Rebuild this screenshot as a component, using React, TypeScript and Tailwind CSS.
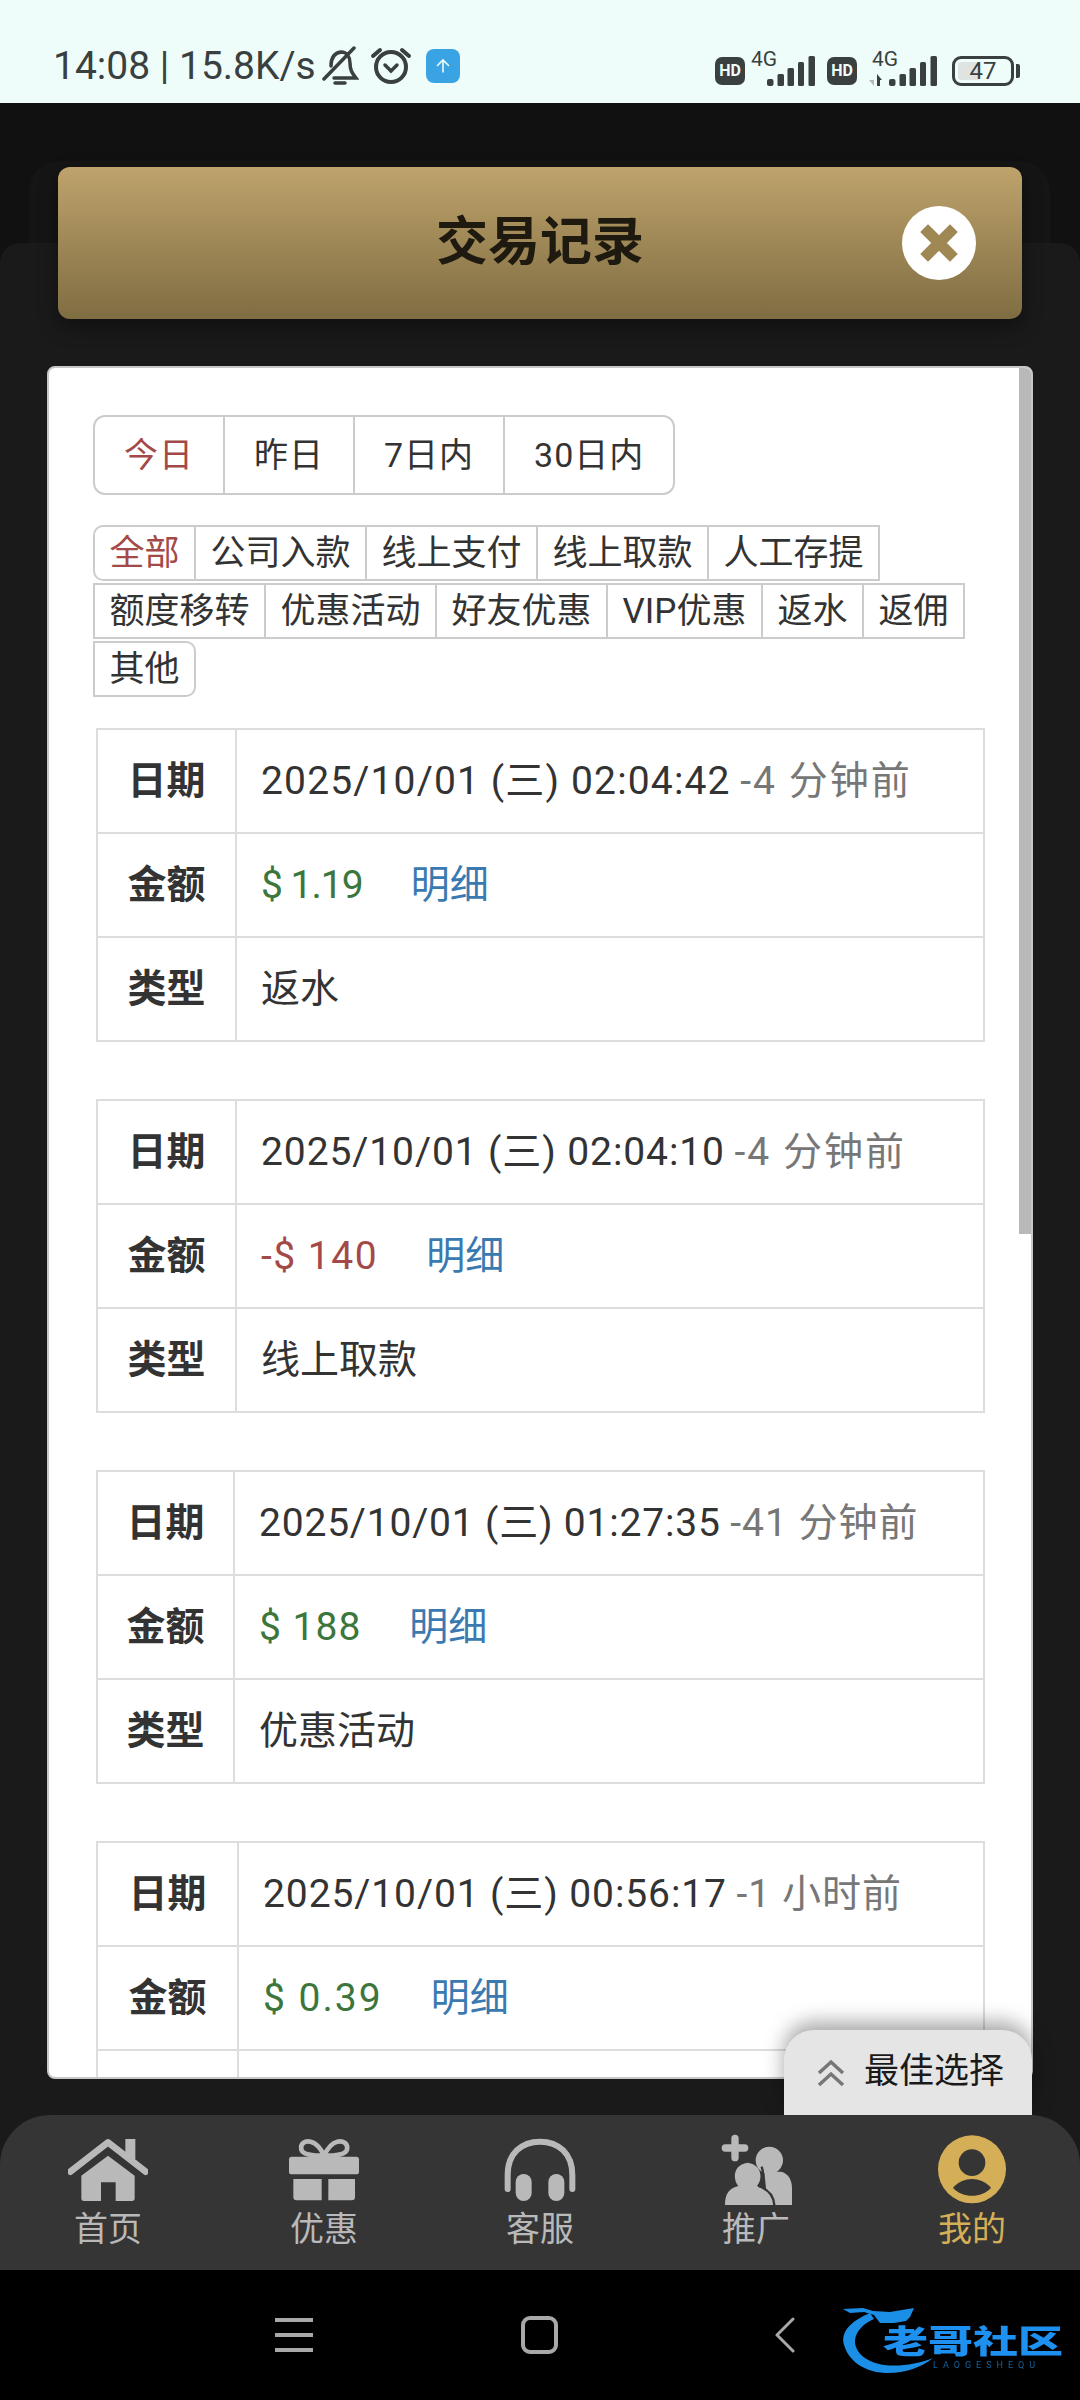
const ICON_GRAY = '#b9b9b9'

const records = [
  { col: 'w-[139px]', date: '2025/10/01 (三) 02:04:42', dateTone: 'tracking-[1.15px]', ago: '-4 分钟前', agoTone: 'tracking-[2px]', amount: '$ 1.19', tone: 'text-[#3c763d] tracking-[-1px]', type: '返水' },
  { col: 'w-[139px]', date: '2025/10/01 (三) 02:04:10', dateTone: 'tracking-[0.9px]', ago: '-4 分钟前', agoTone: 'tracking-[2px]', amount: '-$ 140', tone: 'text-[#a34a48] tracking-[1.5px]', type: '线上取款' },
  { col: 'w-[137px]', date: '2025/10/01 (三) 01:27:35', dateTone: 'tracking-[0.8px]', ago: '-41 分钟前', agoTone: 'tracking-[1px]', amount: '$ 188', tone: 'text-[#3c763d] tracking-[1px]', type: '优惠活动' },
  { col: 'w-[141px]', date: '2025/10/01 (三) 00:56:17', dateTone: 'tracking-[0.9px]', ago: '-1 小时前', agoTone: 'tracking-[1px]', amount: '$ 0.39', tone: 'text-[#3c763d] tracking-[2px]', type: '' },
]

const dateTabs = ['今日', '昨日', '7日内', '30日内']
const filters = ['全部', '公司入款', '线上支付', '线上取款', '人工存提', '额度移转', '优惠活动', '好友优惠', 'VIP优惠', '返水', '返佣', '其他']

const SignalBars = () => (
  <svg width="48" height="30" viewBox="0 0 48 30" fill="#3a3f3f">
    <rect x="0" y="23" width="6.5" height="7" rx="2" />
    <rect x="10.5" y="18" width="6.5" height="12" rx="1.5" />
    <rect x="20.5" y="12" width="6.5" height="18" rx="1.5" />
    <rect x="31" y="6" width="6" height="24" rx="1.5" />
    <rect x="41.5" y="0" width="6.5" height="30" rx="1.5" />
  </svg>
)

const HdBadge = () => (
  <div className="flex h-[28px] w-[30px] shrink-0 items-center justify-center rounded-[7px] bg-[#3a3f3f] text-[16px] leading-none font-bold text-[#eefdf9]">
    HD
  </div>
)

const StatusBar = () => (
  <div className="flex h-[103px] items-end justify-between bg-[#eefdf9] pr-[66px] pb-[17px] pl-[53px] text-[#3a3f3f]">
    <div className="flex items-center">
      <span className="text-[39px] leading-[40px]">14:08 | 15.8K/s</span>
      <svg className="ml-[5px]" width="38" height="40" viewBox="0 0 38 40" fill="none" stroke="#3a3f3f" strokeWidth="3.5" strokeLinecap="round">
        <path d="M10 20 C10 12 13 7 20 6 C26 6 29 11 29 17 C29 24 31 27 35 32 H13" />
        <path d="M33 2 L3 33" />
        <path d="M14 37 H24" />
      </svg>
      <svg className="ml-[11px]" width="42" height="40" viewBox="0 0 42 40" fill="none" stroke="#3a3f3f" strokeLinecap="round">
        <circle cx="21" cy="21" r="15" strokeWidth="4" />
        <path d="M3 10 L10 4 M39 10 L32 4" strokeWidth="4" />
        <path d="M15 19 L21 25 L27 19" strokeWidth="3.5" />
      </svg>
      <div className="ml-[14px] flex h-[34px] w-[34px] items-center justify-center rounded-[8px] bg-[#3aa3e3]">
        <svg width="18" height="18" viewBox="0 0 18 18" fill="none" stroke="#eefdf9" strokeWidth="1.6" strokeLinecap="round">
          <path d="M9 15 V3 M3.5 8.5 L9 3 L14.5 8.5" />
        </svg>
      </div>
    </div>
    <div className="flex items-center">
      <HdBadge />
      <div className="relative ml-[22px] h-[30px] w-[48px]">
        <span className="absolute -top-[7px] -left-[16px] text-[21px] leading-none">4G</span>
        <SignalBars />
      </div>
      <div className="ml-[12px]">
        <HdBadge />
      </div>
      <div className="relative ml-[32px] h-[30px] w-[48px]">
        <span className="absolute -top-[7px] -left-[17px] text-[21px] leading-none">4G</span>
        <svg className="absolute bottom-0 -left-[20px]" width="14" height="12" viewBox="0 0 14 12">
          <path d="M0 6 H5 V12 Z" fill="#b5bab9" />
          <path d="M8 0 L13 6 H11 V12 H8 Z" fill="#3a3f3f" />
        </svg>
        <SignalBars />
      </div>
      <div className="relative ml-[15px] flex h-[30px] w-[62px] items-center rounded-[9px] border-[3px] border-[#3a3f3f] p-[3px]">
        <div className="h-full w-[43%] rounded-[3px] bg-[#dfe3e1]" />
        <span className="absolute inset-0 text-center text-[24px] leading-[24px]">47</span>
        <div className="absolute top-[5px] -right-[9px] h-[14px] w-[4px] rounded-r-[2px] bg-[#3a3f3f]" />
      </div>
    </div>
  </div>
)

const RecordTable = ({ record }: { record: (typeof records)[number] }) => {
  const th = `${record.col} border-2 border-[#dddddd] text-center font-bold text-[#333333]`
  const td = 'border-2 border-[#dddddd] pl-[24px] text-left font-normal'
  return (
    <table className="ml-[3px] w-[889px] shrink-0 border-collapse text-[39px]">
      <tbody>
        <tr className="h-[104px]">
          <th className={th}>日期</th>
          <td className={`${td} text-[#333333]`}>
            <span className={record.dateTone}>{record.date}</span>{' '}
            <span className={`${record.agoTone} text-[#777777]`}>{record.ago}</span>
          </td>
        </tr>
        <tr className="h-[104px]">
          <th className={th}>金额</th>
          <td className={td}>
            <span className={record.tone}>{record.amount}</span>
            <span className="ml-[48px] text-[#3a7ab0]">明细</span>
          </td>
        </tr>
        <tr className="h-[104px]">
          {/* last record runs past the fold, its third row shows only the grid */}
          <th className={th}>{record.type && '类型'}</th>
          <td className={`${td} text-[#333333]`}>{record.type}</td>
        </tr>
      </tbody>
    </table>
  )
}

const tabs = [
  {
    label: '首页',
    box: '85 27 240 216',
    icon: (
      <g fill={ICON_GRAY}>
        <path d="M92 140 L205 52 L318 140" fill="none" stroke={ICON_GRAY} strokeWidth="20" strokeLinecap="round" strokeLinejoin="round" />
        <rect x="257" y="42" width="30" height="60" />
        <path d="M205 92 L285 152 V220 Q285 228 277 228 H228 V172 H184 V228 H133 Q125 228 125 220 V152 Z" />
      </g>
    ),
  },
  {
    label: '优惠',
    box: '732 27 240 216',
    icon: (
      <g fill={ICON_GRAY}>
        <path d="M852 92 C830 92 790 92 784 74 C780 56 795 46 812 50 C830 54 845 75 852 92 C860 75 875 54 892 50 C910 46 925 56 921 74 C915 92 875 92 852 92 Z" fill="none" stroke={ICON_GRAY} strokeWidth="14" />
        <rect x="747" y="95" width="210" height="53" rx="8" />
        <path d="M760 162 H845 V226 H770 Q760 226 760 216 Z" />
        <path d="M865 162 H945 V216 Q945 226 935 226 H865 Z" />
      </g>
    ),
  },
  {
    label: '客服',
    box: '0 27 240 216',
    icon: (
      <g fill={ICON_GRAY}>
        <path d="M23 192 V150 C23 85 65 50 120 50 C175 50 217 85 217 150 V192" fill="none" stroke={ICON_GRAY} strokeWidth="18" strokeLinecap="round" />
        <rect x="47" y="147" width="48" height="81" rx="24" />
        <rect x="145" y="147" width="48" height="81" rx="24" />
      </g>
    ),
  },
  {
    label: '推广',
    box: '645 27 240 216',
    icon: (
      <g fill={ICON_GRAY}>
        <path d="M702 40 V98 M673 69 H731" fill="none" stroke={ICON_GRAY} strokeWidth="22" strokeLinecap="round" />
        <circle cx="805" cy="106" r="41" />
        <path d="M790 140 H840 C862 145 873 165 873 190 V240 H800 Z" />
        <path d="M672 240 C672 205 685 190 712 183 C695 165 695 118 740 113 C785 118 785 165 768 183 C795 190 810 205 812 240 Z" />
        <path d="M772 183 C800 192 818 210 820 240" fill="none" stroke="#353535" strokeWidth="7" />
        <path d="M782 125 C790 150 785 170 772 183" fill="none" stroke="#353535" strokeWidth="7" />
      </g>
    ),
  },
  {
    label: '我的',
    box: '1295 27 240 216',
    active: true,
    icon: (
      <g>
        <circle cx="1415" cy="133" r="102" fill="#d4af57" />
        <circle cx="1415" cy="113" r="40" fill="#353535" />
        <path d="M1358 188 C1375 170 1395 162 1415 162 C1435 162 1455 170 1472 188 C1458 204 1436 212 1415 212 C1394 212 1372 204 1358 188 Z" fill="#353535" />
      </g>
    ),
  },
]

const BottomTabs = () => (
  <div className="flex h-[155px] rounded-t-[50px] bg-[#353535] pt-[19px]">
    {tabs.map((tab) => (
      <div key={tab.label} className="flex flex-1 flex-col items-center">
        <svg width="80" height="72" viewBox={tab.box}>
          {tab.icon}
        </svg>
        <span className={`text-[34px] leading-[46px] ${tab.active ? 'text-[#d4af57]' : 'text-[#b9b9b9]'}`}>{tab.label}</span>
      </div>
    ))}
  </div>
)

const NavBar = () => (
  <div className="relative flex h-[130px] items-center bg-black pl-[275px]">
    <svg width="38" height="36" viewBox="0 0 38 36" stroke="#a8a8a8" strokeWidth="4">
      <path d="M0 3 H38 M0 18 H38 M0 33 H38" />
    </svg>
    <div className="ml-[208px] h-[38px] w-[37px] rounded-[9px] border-[4px] border-[#a8a8a8]" />
    <svg className="ml-[217px]" width="20" height="36" viewBox="0 0 20 36" fill="none" stroke="#a8a8a8" strokeWidth="3" strokeLinecap="round" strokeLinejoin="round">
      <path d="M18 2 L2 18 L18 34" />
    </svg>
    {/* watermark logo */}
    <div className="absolute top-[33px] left-[840px] h-[75px] w-[225px] blur-[0.6px]">
      <svg className="absolute inset-0" width="225" height="75" viewBox="0 0 225 75" fill="#1b8fe6">
        <path d="M30 10 C10 18 0 30 4 42 C10 62 30 70 48 70 C65 70 82 64 93 55 C78 61 60 64 44 62 C28 60 14 50 15 37 C16 28 24 20 34 16 Z" />
        <path d="M3 6 L23 5 L33 8 L50 9 L74 5 L70 14 L66 18 L54 20 L40 20 L34 12 L24 9 L10 10 Z" />
      </svg>
      <span className="absolute top-[22px] left-[43px] origin-center scale-y-[0.72] text-[45px] leading-[34px] font-black whitespace-nowrap text-[#1e90ef]">老哥社区</span>
      <span className="absolute top-[57px] left-[93px] text-[9px] leading-[10px] tracking-[5px] whitespace-nowrap text-[#16639f]">LAOGESHEQU</span>
    </div>
  </div>
)

export default function App() {
  return (
    <div className="flex h-[2400px] w-[1080px] flex-col bg-[#1a1a1a] font-['Roboto','Noto_Sans_CJK_SC',sans-serif]">
      <StatusBar />
      <main className="relative flex flex-1 flex-col overflow-hidden bg-[#111111]">
        {/* stacked sheets behind the dialog */}
        <div className="absolute top-[58px] right-[30px] left-[29px] h-[120px] rounded-t-[30px] bg-[#151515]" />
        <div className="absolute top-[140px] right-0 bottom-0 left-0 rounded-t-[20px] bg-[#1a1a1a]" />

        <div className="relative mx-[58px] mt-[64px] flex h-[152px] shrink-0 items-center justify-center rounded-[12px] bg-gradient-to-b from-[#bfa36c] to-[#7f6d42] shadow-[0_8px_20px_rgba(0,0,0,0.4)]">
          <h1 className="text-[52px] font-bold text-[#1f1a10]">交易记录</h1>
          <div className="absolute right-[46px] flex h-[74px] w-[74px] items-center justify-center rounded-full bg-white">
            <svg width="44" height="44" viewBox="0 0 44 44" stroke="#9f8853" strokeWidth="11" strokeLinecap="square">
              <path d="M11 11 L33 33 M33 11 L11 33" />
            </svg>
          </div>
        </div>

        <div className="relative mx-[47px] mt-[47px] flex min-h-0 flex-1 flex-col overflow-hidden rounded-[8px] border-2 border-[#c8c8c8] bg-white pt-[47px] pl-[44px]">
          <div className="absolute top-0 right-0 h-[866px] w-[12px] bg-[#b9b9b9]" />
          <div className="flex h-[80px] w-fit shrink-0 rounded-[12px] border-2 border-[#cccccc] text-[34px] leading-none tracking-[1px]">
            {dateTabs.map((label, i) => (
              <div key={label} className={`flex items-center px-[29px] ${i > 0 ? 'border-l-2 border-[#cccccc]' : ''} ${i === 0 ? 'text-[#a34a48]' : 'text-[#333333]'}`}>
                {label}
              </div>
            ))}
          </div>
          <div className="mt-[30px] flex w-[894px] shrink-0 flex-wrap gap-y-[2px] text-[35px] leading-none">
            {filters.map((label, i) => (
              <div
                key={label}
                className={`-mr-[2px] flex h-[56px] items-center border-2 border-[#cccccc] px-[14.5px] ${i === 0 ? 'rounded-l-[10px] text-[#a34a48]' : 'text-[#333333]'} ${i === filters.length - 1 ? 'rounded-r-[10px]' : ''}`}
              >
                {label}
              </div>
            ))}
          </div>
          <div className="mt-[31px] flex shrink-0 flex-col gap-[57px]">
            {records.map((record) => (
              <RecordTable key={record.date} record={record} />
            ))}
          </div>
        </div>

        <div className="h-[36px] shrink-0" />

        <div className="absolute right-[48px] bottom-0 flex h-[85px] w-[248px] items-center rounded-t-[30px] bg-[#e5e5e5] pl-[32px] text-[35px] text-[#1a1a1a] shadow-[0_-8px_20px_rgba(0,0,0,0.35)]">
          <svg width="30" height="28" viewBox="0 0 30 28" fill="none" stroke="#777777" strokeWidth="3.5">
            <path d="M3 14 L15 3 L27 14 M3 26 L15 15 L27 26" />
          </svg>
          <span className="ml-[18px]">最佳选择</span>
        </div>
      </main>
      <BottomTabs />
      <NavBar />
    </div>
  )
}
